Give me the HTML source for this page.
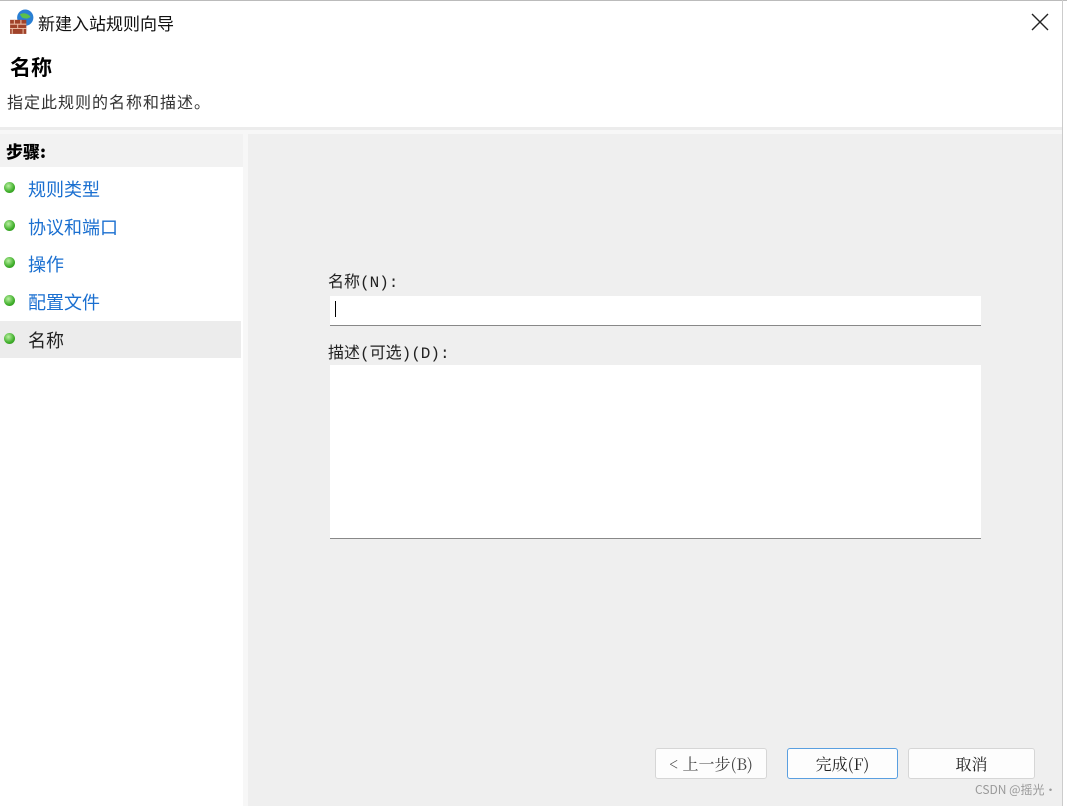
<!DOCTYPE html>
<html><head><meta charset="utf-8"><style>
body{margin:0;width:1067px;height:806px;background:#fff;position:relative;overflow:hidden;font-family:"Liberation Sans","Noto Sans CJK SC",sans-serif;}
.a{position:absolute}
.cjk{font-family:"Noto Sans CJK SC","WenQuanYi Zen Hei",sans-serif}
.dot{position:absolute;left:4px;width:11px;height:11px;border-radius:50%;background:radial-gradient(circle at 40% 35%,#b8f0a0,#3fae2a 60%,#2a8a1c)}
.item{position:absolute;left:28px;font-size:18px;color:#1a6fd0}
.btn{position:absolute;top:748px;height:29px;background:#fdfdfd;border:1px solid #d6d6d6;border-radius:3px;font-size:16px;color:#222;text-align:center;line-height:29px;font-family:"Noto Serif CJK SC","Liberation Serif",serif}
.lbl{font-family:"Liberation Mono","Noto Sans CJK SC",monospace}
</style></head><body>
<div class="a" style="left:0;top:0;width:1067px;height:1px;background:#bbb"></div>
<div class="a" style="left:1062px;top:0;width:1px;height:806px;background:#ccc"></div>
<svg class="a" style="left:9px;top:9px" width="26" height="26" viewBox="0 0 24 24">
<circle cx="15" cy="8" r="7.5" fill="#2a7fd4"/><path d="M10 5 q5 -3 10 2 q-3 3 -8 1z" fill="#5cc04a"/>
<rect x="1" y="10" width="15" height="13" fill="#a0432a"/>
<path d="M1 14h15M1 18h15M5 10v4M11 10v4M8 14v4M3 18v5M13 18v5" stroke="#e8b8a0" stroke-width="1"/>
</svg>
<div class="a cjk" style="left:38px;top:10px;font-size:17px;color:#111">新建入站规则向导</div>
<svg class="a" style="left:1031px;top:13px" width="18" height="18" viewBox="0 0 18 18"><path d="M1 1L17 17M17 1L1 17" stroke="#222" stroke-width="1.4"/></svg>
<div class="a cjk" style="left:10px;top:52px;font-size:21px;font-weight:bold;color:#000">名称</div>
<div class="a cjk" style="left:7px;top:89px;font-size:16px;color:#333;letter-spacing:1px">指定此规则的名称和描述。</div>
<div class="a" style="left:0;top:127px;width:1062px;height:3px;background:#ececec"></div>
<div class="a" style="left:0;top:130px;width:1062px;height:676px;background:#f7f7f7"></div>
<div class="a" style="left:0;top:134px;width:243px;height:672px;background:#fff"></div>
<div class="a" style="left:0;top:134px;width:243px;height:33px;background:#f2f2f2"></div>
<div class="a cjk" style="left:6px;top:138px;font-size:17px;font-weight:900;color:#000">步骤:</div>
<div class="a" style="left:0;top:321px;width:241px;height:37px;background:#ececec"></div>
<div class="dot" style="top:182px"></div><div class="item cjk" style="top:176px">规则类型</div>
<div class="dot" style="top:220px"></div><div class="item cjk" style="top:214px">协议和端口</div>
<div class="dot" style="top:257px"></div><div class="item cjk" style="top:251px">操作</div>
<div class="dot" style="top:295px"></div><div class="item cjk" style="top:289px">配置文件</div>
<div class="dot" style="top:333px"></div><div class="item cjk" style="top:327px;color:#222">名称</div>
<div class="a" style="left:248px;top:134px;width:814px;height:672px;background:#efefef"></div>
<div class="a lbl" style="left:328px;top:268px;font-size:16px;color:#222">名称(N):</div>
<div class="a" style="left:330px;top:296px;width:651px;height:29px;background:#fff;border-bottom:1px solid #888"></div>
<div class="a" style="left:335px;top:301px;width:1px;height:16px;background:#000"></div>
<div class="a lbl" style="left:328px;top:339px;font-size:16px;color:#222">描述(可选)(D):</div>
<div class="a" style="left:330px;top:365px;width:651px;height:173px;background:#fff;border-bottom:1px solid #888"></div>
<div class="btn" style="left:655px;width:110px;color:#444">&lt; 上一步(B)</div>
<div class="btn" style="left:787px;width:109px;border-color:#5a9fe0">完成(F)</div>
<div class="btn" style="left:908px;width:125px">取消</div>
<div class="a cjk" style="left:975px;top:781px;font-size:12px;color:#999">CSDN @摇光·</div>
</body></html>
